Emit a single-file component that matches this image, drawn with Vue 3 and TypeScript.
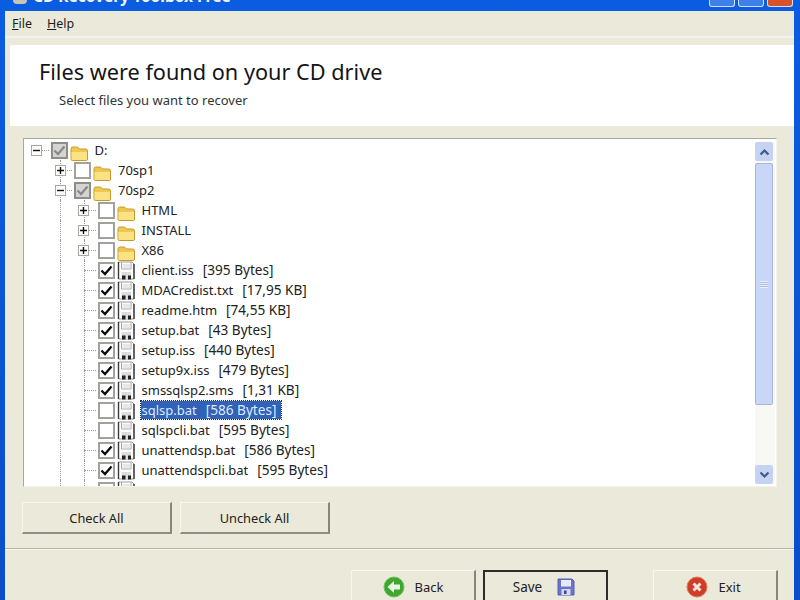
<script setup lang="ts">
type Row = { depth: number; kind: 'folder' | 'file'; name: string; size?: string; check: 'on' | 'off' | 'grey'; exp?: '+' | '-'; sel?: boolean }
const f = (name: string, size: string, check: 'on' | 'off' = 'on', sel = false): Row => ({ depth: 2, kind: 'file', name, size, check, sel })
const rows: Row[] = [
  { depth: 0, kind: 'folder', name: 'D:', check: 'grey', exp: '-' },
  { depth: 1, kind: 'folder', name: '70sp1', check: 'off', exp: '+' },
  { depth: 1, kind: 'folder', name: '70sp2', check: 'grey', exp: '-' },
  { depth: 2, kind: 'folder', name: 'HTML', check: 'off', exp: '+' },
  { depth: 2, kind: 'folder', name: 'INSTALL', check: 'off', exp: '+' },
  { depth: 2, kind: 'folder', name: 'X86', check: 'off', exp: '+' },
  f('client.iss', '[395 Bytes]'),
  f('MDACredist.txt', '[17,95 KB]'),
  f('readme.htm', '[74,55 KB]'),
  f('setup.bat', '[43 Bytes]'),
  f('setup.iss', '[440 Bytes]'),
  f('setup9x.iss', '[479 Bytes]'),
  f('smssqlsp2.sms', '[1,31 KB]'),
  f('sqlsp.bat', '[586 Bytes]', 'off', true),
  f('sqlspcli.bat', '[595 Bytes]', 'off'),
  f('unattendsp.bat', '[586 Bytes]'),
  f('unattendspcli.bat', '[595 Bytes]'),
  { depth: 2, kind: 'file', name: '', check: 'off' },
]
</script>

<template>
  <div class="window">
    <div class="titlebar">
      <span class="app-icon"></span>
      <span class="app-title">CD Recovery Toolbox Free</span>
      <span class="caps">
        <span class="cap"></span><span class="cap"></span><span class="cap close"></span>
      </span>
    </div>
    <div class="client">
      <div class="menu">
        <span class="menu-item"><u>F</u>ile</span>
        <span class="menu-item"><u>H</u>elp</span>
      </div>
      <div class="header">
        <div class="title">Files were found on your CD drive</div>
        <div class="subtitle">Select files you want to recover</div>
      </div>
      <div class="tree">
        <div class="rows">
          <div v-for="(r, i) in rows" :key="i" class="row">
            <span v-if="r.depth === 2" class="cell"></span>
            <span v-if="r.depth >= 1" class="cell" :class="{ line: r.depth === 2 }"></span>
            <span class="cell stub" :class="{ line: r.depth > 0 }">
              <span v-if="r.exp" class="expander">
                <svg width="9" height="9" viewBox="0 0 9 9"><path :d="r.exp === '+' ? 'M1 4.5H8M4.5 1V8' : 'M1 4.5H8'" stroke="#111" stroke-width="1.4" /></svg>
              </span>
            </span>
            <span class="check" :class="r.check">
              <svg v-if="r.check !== 'off'" width="13" height="13" viewBox="0 0 13 13"><path d="M1.5 6.5L5 10L11.5 2.5" fill="none" :stroke="r.check === 'on' ? '#0c0c0c' : '#8a8a8a'" stroke-width="2.3" /></svg>
            </span>
            <svg v-if="r.kind === 'folder'" class="icon folder" width="18" height="15" viewBox="0 0 18 15">
              <path d="M1 3Q1 1 3 1H7.5L9.5 3H15.5Q17.5 3 17.5 5V13Q17.5 14.5 16 14.5H2.5Q1 14.5 1 13Z" fill="#f0c850" stroke="#c29a30" />
              <path d="M1.5 6H17V13Q17 14 16 14H2.5Q1.5 14 1.5 13Z" fill="#fbe285" />
            </svg>
            <svg v-else class="icon" width="18" height="19" viewBox="0 0 18 19">
              <path d="M1.5 1H15L17 3V18H1.5Z" fill="#fff" stroke="#9a9a9a" />
              <path d="M1.5 1V18M17 3V18" stroke="#3a3a3a" stroke-width="1.4" fill="none" />
              <path d="M4.5 1.5V8H14V1.5" fill="none" stroke="#a8a8a8" />
              <path d="M5.5 4H13M5.5 6H13" stroke="#d0d0d0" />
              <rect x="4.5" y="11" width="9.5" height="7.5" fill="#dedede" />
              <rect x="5" y="14.5" width="3.5" height="4" fill="#222" />
              <rect x="11" y="14.5" width="3" height="4" fill="#222" />
            </svg>
            <span v-if="r.name" class="label" :class="{ sel: r.sel }">{{ r.name }}<span v-if="r.size" class="size">{{ r.size }}</span></span>
          </div>
        </div>
        <div class="scroll">
          <span class="sbtn">
            <svg width="11" height="8" viewBox="0 0 11 8"><path d="M1.5 6.5L5.5 2.5L9.5 6.5" fill="none" stroke="#3f5a86" stroke-width="2.2" /></svg>
          </span>
          <span class="thumb"><span class="grip"></span></span>
          <span class="sbtn">
            <svg width="11" height="8" viewBox="0 0 11 8"><path d="M1.5 1.5L5.5 5.5L9.5 1.5" fill="none" stroke="#3f5a86" stroke-width="2.2" /></svg>
          </span>
        </div>
      </div>
      <div class="actions">
        <button class="btn small">Check All</button>
        <button class="btn small">Uncheck All</button>
      </div>
      <div class="divider"></div>
      <div class="footer">
        <button class="btn big back">
          <svg width="22" height="22" viewBox="0 0 22 22">
            <circle cx="11" cy="11" r="10" fill="#3fa62f" stroke="#6cc45c" />
            <path d="M4.5 11L11 5V8.5H17V13.5H11V17Z" fill="#eaf6e3" />
          </svg>
          <span>Back</span>
        </button>
        <button class="btn big save">
          <span>Save</span>
          <svg width="18" height="18" viewBox="0 0 18 18">
            <path d="M1 1H15L17 3V17H1Z" fill="#6b74c8" stroke="#5560b4" />
            <rect x="4" y="2" width="10" height="6.5" fill="#e8eaf8" />
            <rect x="4.5" y="11" width="9" height="6" fill="#d5d8ef" />
            <rect x="7" y="12.5" width="2.5" height="3.5" fill="#3c4488" />
          </svg>
        </button>
        <button class="btn big exit">
          <svg width="22" height="22" viewBox="0 0 22 22">
            <circle cx="11" cy="11" r="10" fill="#cf3d28" stroke="#e2775f" />
            <path d="M7.5 7.5L14.5 14.5M14.5 7.5L7.5 14.5" stroke="#f6e4df" stroke-width="3" />
          </svg>
          <span>Exit</span>
        </button>
      </div>
    </div>
  </div>
</template>

<style>
html, body { margin: 0; overflow: hidden; background: #0a54d6; }
</style>

<style scoped>
.window {
  width: 800px; height: 600px; overflow: hidden; display: flex; flex-direction: column;
  background: linear-gradient(#0a5ce0, #0a4fc8);
  font-family: "Noto Sans", "DejaVu Sans", sans-serif; color: #1c1c1c;
}
.titlebar { height: 11px; flex: none; display: flex; align-items: flex-start; overflow: hidden; padding-left: 13px; }
.app-icon { width: 14px; height: 4px; border-radius: 0 0 7px 7px; background: #c9c4b4; flex: none; }
.app-title { color: #f2f6ff; font-weight: 700; font-size: 15.5px; line-height: 15px; margin-left: 6px; margin-top: -11px; }
.caps { margin-left: auto; margin-right: 7px; display: flex; gap: 3px; }
.cap { width: 26px; height: 7px; box-sizing: border-box; border: 1px solid #cfe0f8; border-top: 0; border-radius: 0 0 3px 3px; background: #3f7fe8; }
.cap.close { background: #d9532a; }
.client { flex: 1; margin: 0 6px 0 5px; background: #ebe9da; display: flex; flex-direction: column; min-height: 0; }
.menu { height: 25px; flex: none; display: flex; align-items: center; padding-left: 7px; gap: 15px; font-size: 12.5px; border-bottom: 2px solid #f4f2e8; }
.menu-item { line-height: 16px; }
.header { margin: 7px 0 0 5px; height: 81px; flex: none; background: #fff; box-sizing: border-box; padding: 13px 0 0 29px; }
.title { font-size: 21.7px; line-height: 28px; color: #151515; }
.subtitle { font-size: 13px; line-height: 18px; margin: 5px 0 0 20px; color: #333; }
.tree { margin: 12px 0 0 18px; width: 754px; height: 349px; flex: none; box-sizing: border-box; background: #fff; border: 1px solid #a9a99f; border-right-color: #f5f4ec; border-bottom-color: #f5f4ec; display: flex; overflow: hidden; }
.rows { flex: 1; padding: 1px 0 0 1px; overflow: hidden; }
.row { height: 20px; display: flex; align-items: center; }
.cell { width: 23.5px; height: 20px; flex: none; position: relative; }
.cell.line::before { content: ""; position: absolute; left: 11.5px; top: 0; bottom: 0; border-left: 1px dotted #9c9c94; }
.cell.stub::after { content: ""; position: absolute; left: 12px; right: 0; top: 10px; border-top: 1px dotted #9c9c94; }
.expander { position: absolute; left: 6px; top: 4.5px; width: 9px; height: 9px; border: 1px solid #a8a8a0; background: #fff; z-index: 1; display: block; }
.expander svg { display: block; }
.check { width: 13px; height: 13px; margin-left: 2px; flex: none; border: 2px solid #a2a29c; background: #fff; display: block; }
.check svg { display: block; }
.check.grey { background: #d4d4d2; border-color: #8e8e88; }
.icon { margin-left: 2px; flex: none; }
.folder { margin-top: 6px; }
.label { margin-left: 6px; font-size: 13px; line-height: 18px; white-space: nowrap; padding: 0 2px 0 1px; color: #222; }
.label.sel { background: #2f62b8; color: #dfe9fb; outline: 1px dotted #16305e; padding-right: 5px; }
.size { margin-left: 9px; font-size: 13.6px; }
.scroll { width: 20px; margin: 3px 1px 2px 0; flex: none; display: flex; flex-direction: column; background: #f8f8f4; }
.sbtn { height: 19px; width: 18px; flex: none; background: #c5d3f2; border-radius: 2px; display: flex; align-items: center; justify-content: center; }
.thumb { margin-top: 2px; height: 242px; width: 18px; flex: none; box-sizing: border-box; background: #c8d6f7; border: 1px solid #a6b6dc; border-radius: 2px; display: flex; align-items: center; justify-content: center; margin-bottom: auto; }
.grip { width: 8px; height: 7px; background: repeating-linear-gradient(#eef2fc 0 1px, #a9bbe2 1px 2px); }
.actions { display: flex; gap: 8px; margin: 15px 0 0 17px; flex: none; }
.btn { font: inherit; color: #222; background: #ebe9da; box-sizing: border-box; border: 1px solid #f8f7ef; border-right: 2px solid #86867c; border-bottom: 2px solid #8e8e84; border-radius: 0; padding: 0; display: flex; align-items: center; justify-content: center; }
.small { width: 150px; height: 32px; font-size: 12.8px; }
.divider { margin-top: 14px; height: 2px; flex: none; background: linear-gradient(#b4b4a8 50%, #f8f7ef 50%); }
.footer { display: flex; margin: 20px 0 0 346px; flex: none; }
.big { width: 125px; height: 34px; font-size: 13px; gap: 10px; }
.save { margin-left: 7px; border: 2px solid #2c2c28; gap: 15px; padding-right: 3px; font-size: 13.5px; }
.back { padding-left: 0; }
.exit { margin-left: 45px; padding-right: 3px; }
</style>
